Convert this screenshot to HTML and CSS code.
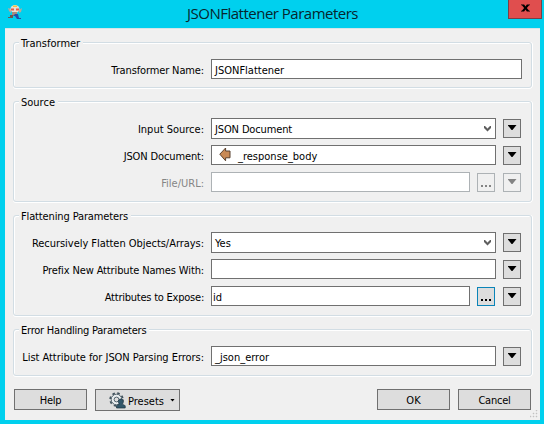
FILE: index.html
```
<!DOCTYPE html>
<html lang="en">
<head>
<meta charset="utf-8">
<title>JSONFlattener Parameters</title>
<link rel="stylesheet" href="styles.css">
</head>
<body>
<div class="window">
  <header class="titlebar">
    <svg class="app-icon" width="16" height="16" viewBox="0 0 16 16">
      <path d="M1 4l3 1v4L2 7zM12 6l3-2-1 4-2 1z" fill="#b9a79b"/>
      <ellipse cx="8" cy="5" rx="4.5" ry="4" fill="#e7dfd4"/>
      <path d="M6 1.500h4V3H6z" fill="#efc343"/>
      <path d="M4 4.500h3v2H4zM9 4.500h3v2H9z" fill="#e65a45"/>
      <path d="M5 8h5v4H5z" fill="#a98a7d"/>
      <path d="M3 11h3v3H1v-1h2z" fill="#70554c"/>
      <path d="M8 10h3l1 4h2v1h-4l-2-3H6z" fill="#244fa5"/>
    </svg>
    <h1>JSONFlattener Parameters</h1>
    <button class="close" aria-label="Close"><svg width="9" height="8" viewBox="0 0 10 8"><path d="M0 0h3.500L5 2.200 6.500 0H10v1H9L6.500 4 9 7h1v1H6.500L5 5.800 3.500 8H0V7h1l2.500-3L1 1H0z" fill="#000"/></svg></button>
  </header>
  <main class="body">
    <section class="group g-name">
      <h2>Transformer</h2>
      <div class="row"><label class="snug">Transformer Name:</label><div class="field"><span>JSONFlattener</span></div></div>
    </section>
    <section class="group g-source">
      <h2>Source</h2>
      <div class="row"><label>Input Source:</label><div class="field combo"><span class="snug">JSON Document</span><svg width="7" height="6" viewBox="0 0 7 6"><path d="M0 0h1v1h1v1h1v1h1V2h1V1h1V0h1v2H6v1H5v1H4v1H3V4H2V3H1V2H0z" fill="#606060" stroke="#606060" stroke-width=".6"/></svg></div><button class="tool"><i class="tri"></i></button></div>
      <div class="row"><label class="snug">JSON Document:</label><div class="field"><svg class="arrow" width="12" height="15" viewBox="0 0 12 15"><path d="M.8 7.200 6.600 1v3H11v6.800H6.600v3z" fill="#c98a56" stroke="#59412f"/></svg><span>_response_body</span></div><button class="tool"><i class="tri"></i></button></div>
      <div class="row off"><label>File/URL:</label><div class="field"></div><button class="tool"><i class="dots"></i></button><button class="tool"><i class="tri"></i></button></div>
    </section>
    <section class="group g-flat">
      <h2 class="snug">Flattening Parameters</h2>
      <div class="row"><label class="slight">Recursively Flatten Objects/Arrays:</label><div class="field combo"><span>Yes</span><svg width="7" height="6" viewBox="0 0 7 6"><path d="M0 0h1v1h1v1h1v1h1V2h1V1h1V0h1v2H6v1H5v1H4v1H3V4H2V3H1V2H0z" fill="#606060" stroke="#606060" stroke-width=".6"/></svg></div><button class="tool"><i class="tri"></i></button></div>
      <div class="row"><label class="snug">Prefix New Attribute Names With:</label><div class="field"></div><button class="tool"><i class="tri"></i></button></div>
      <div class="row"><label class="tight">Attributes to Expose:</label><div class="field near"><span>id</span></div><button class="tool focus"><i class="dots"></i></button><button class="tool"><i class="tri"></i></button></div>
    </section>
    <section class="group g-error">
      <h2 class="tight">Error Handling Parameters</h2>
      <div class="row"><label class="slight">List Attribute for JSON Parsing Errors:</label><div class="field"><span>_json_error</span></div><button class="tool"><i class="tri"></i></button></div>
    </section>
    <footer class="actions">
      <button class="btn tight">Help</button>
      <button class="btn presets">
        <svg width="17" height="17" viewBox="0 0 17 17">
          <circle cx="7.500" cy="7.500" r="6.300" fill="none" stroke="#41525c" stroke-width="1.800" stroke-dasharray="2.500 2.450"/>
          <circle cx="7.500" cy="7.500" r="5.300" fill="#e9edef" stroke="#52636d"/>
          <circle cx="7.500" cy="7.500" r="2.400" fill="#ddd" stroke="#52636d"/>
          <path d="M7.500 16v-2.300l2.800-1.500C8.500 9.500 9.400 7 11.800 7s3.400 2.500 1.600 5.200l2.800 1.500V16z" fill="#31566a" stroke="#1d3440" stroke-width=".7"/>
        </svg>
        <span>Presets</span><i class="mini"></i>
      </button>
      <span class="space"></span>
      <button class="btn">OK</button>
      <button class="btn cancel tight">Cancel</button>
    </footer>
    <svg class="grip" width="8" height="8" viewBox="0 0 8 8"><path d="M6 0h1v1H6zM3 3h1v1H3zM6 3h1v1H6zM0 6h1v1H0zM3 6h1v1H3zM6 6h1v1H6z" fill="#b4b4b4" stroke="#c8c8c8" stroke-width=".5"/></svg>
  </main>
</div>
</body>
</html>
```
FILE: styles.css
```
* { box-sizing: border-box; }
body { margin: 0; font: 11px/14px "DejaVu Sans Condensed", "DejaVu Sans", sans-serif; font-stretch: condensed; color: #000; }
.window { width: 544px; height: 424px; background: #00d0ee; padding: 0 4px 4px 5px; overflow: hidden; }
.titlebar { height: 28px; position: relative; display: flex; justify-content: center; }
.app-icon { position: absolute; left: 2px; top: 4px; }
h1 { margin: 0; font: 15px/26px "Open Sans", sans-serif; letter-spacing: -.5px; color: #06262e; white-space: nowrap; }
.close { position: absolute; right: -2px; top: -1px; width: 34px; height: 20px; padding: 0 0 2px; border: 1px solid #7b3e46; background: #e04e4e; display: flex; align-items: center; justify-content: center; }
.body { position: relative; height: 392px; background: #f0f0f0; padding: 14px 8px 0; border-top: 1px solid #d5e5e8; }
.group { position: relative; border: 1px solid #d2dde4; border-radius: 3px; box-shadow: inset 1px 1px #fff, 0 1px #fff, 1px 0 #fff; padding: 16px 9px 0 8px; width: 519px; }
.g-name { height: 46px; margin-top: -1px; }
.g-source { height: 101px; margin-top: 13px; }
.g-flat { height: 101px; margin-top: 13px; }
.g-error { height: 47px; margin-top: 13px; }
h2 { position: absolute; left: 5px; top: -6px; margin: 0; padding: 0 3px 0 2px; background: #f0f0f0; font: inherit; white-space: nowrap; }
.slight { letter-spacing: -.04px; }
.snug { letter-spacing: -.13px; }
.tight { letter-spacing: -.23px; }
.row { display: flex; align-items: flex-end; height: 20px; margin-bottom: 7px; }
.row label { width: 182px; margin-right: 7px; display: flex; justify-content: flex-end; height: 15px; white-space: nowrap; }
.field { flex: 1; height: 20px; border: 1px solid #707070; background: #fff; display: flex; align-items: center; padding: 0 4px 0 3px; white-space: nowrap; }
.field span { padding-top: 4px; }
.near { padding-left: 1px; }
.combo { height: 21px; margin-bottom: -1px; justify-content: space-between; }
.combo span { padding-top: 3px; }
.arrow { margin: -1px 7px 0 4px; }
.tool { width: 18px; height: 19px; margin-left: 7px; padding: 0; border: 1px solid #707070; background: #ddd; display: flex; justify-content: center; align-items: flex-start; flex: none; }
.tool + .tool { margin-left: 8px; }
.tool:last-child { margin-right: 1px; }
.tri { width: 9px; height: 5px; margin-top: 5px; background: #000; clip-path: polygon(0 0, 100% 0, 55% 100%, 45% 100%); }
.dots { width: 10px; height: 2px; margin-top: 11px; background: repeating-linear-gradient(90deg, #000 0 2px, transparent 2px 4px); }
.focus { border-color: #0a84b8; }
.off { color: #858585; }
.off .field, .off .tool { border-color: #adb2b5; }
.off .tool { background: #f0f0f0; }
.off .tri { background: #838383; }
.off .dots { background: repeating-linear-gradient(90deg, #838383 0 2px, transparent 2px 4px); }
.actions { display: flex; margin: 13px 0 0 1px; width: 517px; }
.btn { font: inherit; color: #000; width: 73px; height: 21px; padding: 3px 0 0; border: 1px solid #707070; background: #ddd; }
.btn.tight { letter-spacing: -.23px; }
.presets { width: 85px; height: 22px; margin-left: 8px; display: flex; align-items: center; padding: 0 0 0 13px; white-space: nowrap; }
.presets span { margin-left: 2px; padding-top: 3px; }
.mini { width: 5px; height: 3px; margin-left: 6px; background: #000; clip-path: polygon(0 0, 100% 0, 50% 100%); }
.space { flex: 1; }
.cancel { margin-left: 8px; }
.grip { position: absolute; right: 2px; bottom: 2px; }
```
